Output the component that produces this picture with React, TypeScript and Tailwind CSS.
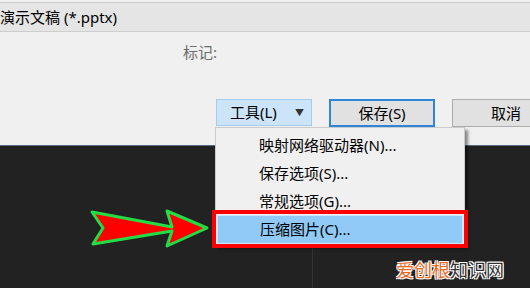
import React from "react";

const menuItems = [
  { label: "映射网络驱动器(N)...", active: false },
  { label: "保存选项(S)...", active: false },
  { label: "常规选项(G)...", active: false },
  { label: "压缩图片(C)...", active: true },
];

export default function App() {
  return (
    <div className="relative w-[530px] h-[288px] overflow-hidden flex flex-col bg-[#f0f0f0] text-[15px] text-black font-['Noto_Sans','Noto_Sans_CJK_SC',sans-serif]">
      {/* file type combo */}
      <div className="h-[2px] shrink-0" />
      <div className="h-[30px] shrink-0 flex items-center border-y border-[#cdcdcd] bg-[#e5e5e5] whitespace-nowrap">
        演示文稿 (*.pptx)
      </div>

      <div className="mt-[10px] h-[20px] leading-[20px] pl-[183px] text-[#6d6d6d] shrink-0">标记:</div>

      {/* buttons */}
      <div className="mt-[37px] flex pl-[216px] shrink-0 whitespace-nowrap">
        <div className="shrink-0 w-[96px] h-[27px] flex items-center pl-[13px] pr-[7px] bg-[#cce4f7] border border-[#a6cdee]">
          <span>工具(L)</span>
          <span className="ml-auto text-[9px] text-[#333]">▼</span>
        </div>
        <div className="shrink-0 ml-[17px] w-[106px] h-[28px] flex items-center justify-center bg-[#e1e1e1] border-2 border-[#2f86d8]">
          保存(S)
        </div>
        <div className="shrink-0 ml-[17px] w-[108px] h-[28px] flex items-center justify-center bg-[#e1e1e1] border border-[#adadad]">
          取消
        </div>
      </div>

      <div className="h-[18px] shrink-0" />

      {/* dark window area */}
      <div className="flex-1 flex bg-[#222222] border-t border-[#55697f]">
        <div className="w-[313px] border-r border-[#333333]" />
      </div>

      {/* dropdown menu */}
      <div className="absolute left-[215px] top-[127px] w-[250px] pt-[3px] pb-[1px] bg-[#f0f0f0] border border-[#cccccc] shadow-[3px_3px_3px_rgba(0,0,0,0.45)] whitespace-nowrap">
        {menuItems.map((item) =>
          item.active ? (
            <div key={item.label} className="relative h-[29px] mx-[1px]">
              <div className="absolute -left-[5px] -right-[5px] -top-[5px] -bottom-[4px] border-4 border-[#ff0000]" />
              <div className="h-full flex items-center pl-[42px] bg-[#91c9f7] border border-[#cce6fb]">
                {item.label}
              </div>
            </div>
          ) : (
            <div key={item.label} className="h-[28px] flex items-center pl-[43px]">
              {item.label}
            </div>
          )
        )}
      </div>

      {/* annotation arrow */}
      <svg
        className="absolute left-[88px] top-[207px] w-[124px] h-[43px]"
        viewBox="0 0 124 43"
        fill="none"
      >
        <path
          d="M4 5 L84 20 L79 4 L119 21 L79 39 L84 24 L5 37 L15 21 Z"
          fill="#ff0000"
          stroke="#22dd44"
          strokeWidth="3"
          strokeLinejoin="round"
        />
      </svg>

      {/* watermark */}
      <div className="absolute left-[396px] top-[258px] text-[18px] leading-[24px] whitespace-nowrap [text-shadow:0_0_1px_#fff,0_0_1px_#fff,1px_1px_0_#fff,-1px_-1px_0_#fff,1px_-1px_0_#fff,-1px_1px_0_#fff]">
        <span className="text-[#e8691e]">爱创根</span>
        <span className="text-[#333333]">知识网</span>
      </div>
    </div>
  );
}
